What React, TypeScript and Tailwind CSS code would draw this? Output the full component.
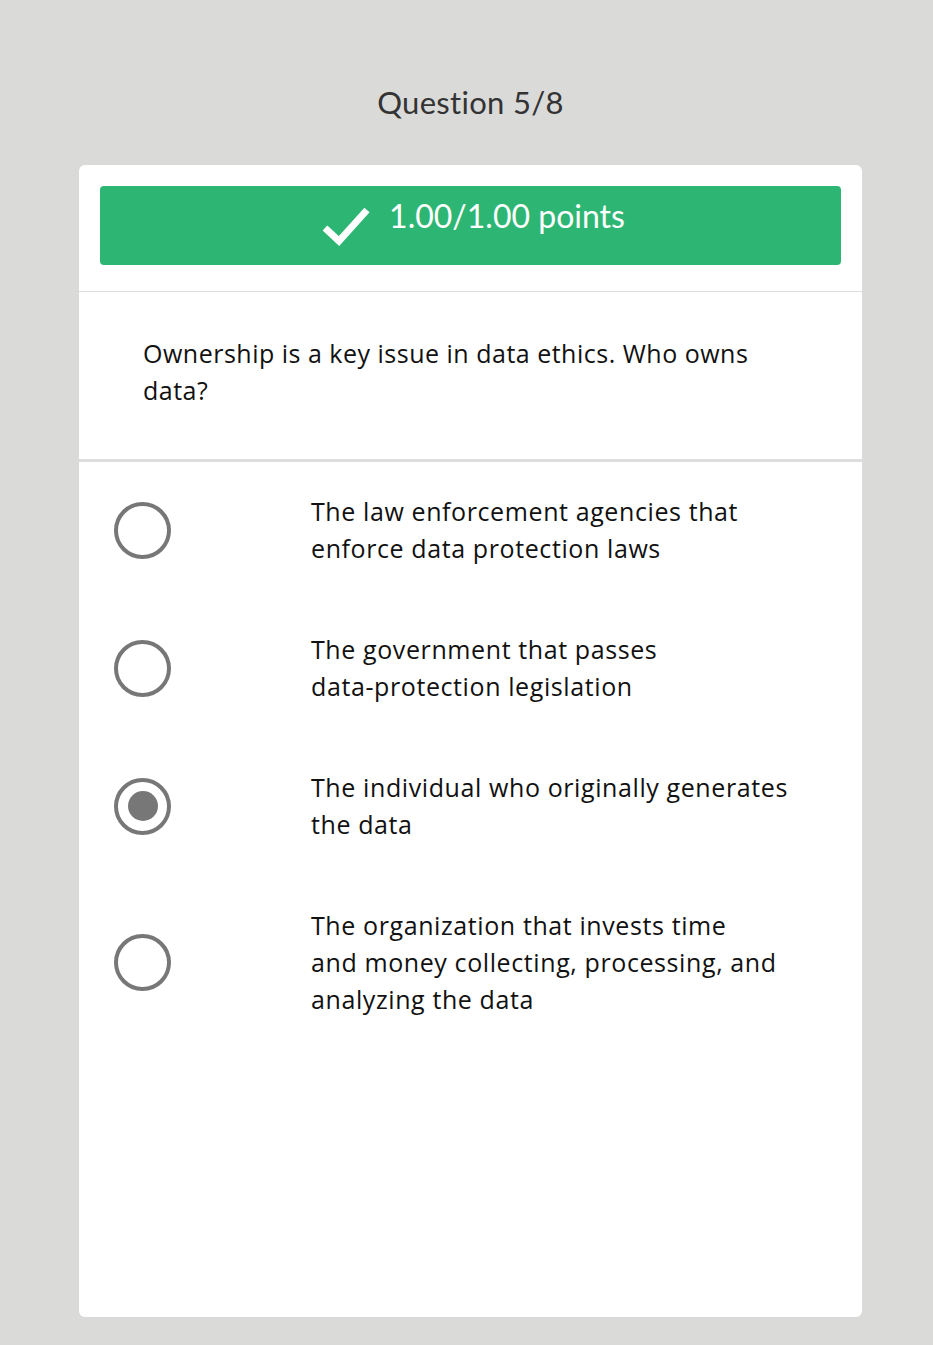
import React from 'react';

const options: string[][] = [
  ['The law enforcement agencies that', 'enforce data protection laws'],
  ['The government that passes', 'data-protection legislation'],
  ['The individual who originally generates', 'the data'],
  ['The organization that invests time', 'and money collecting, processing, and', 'analyzing the data'],
];

const Radio: React.FC<{ checked: boolean }> = ({ checked }) => (
  <div className="w-[57px] h-[57px] rounded-full border-[4px] border-[#777777] flex items-center justify-center shrink-0">
    {checked && <div className="w-[30px] h-[30px] rounded-full bg-[#777777]" />}
  </div>
);

const App: React.FC = () => {
  return (
    <div className="min-h-[1345px] bg-[#dadad9] pt-[83px] pb-7 font-['Open_Sans',sans-serif]">
      <div className="ml-[79px] w-[783px]">
        <h1 className="text-center text-[31px] leading-[38px] text-[#333333] font-['Lato',sans-serif] tracking-[0.3px]">
          Question 5/8
        </h1>

        <div className="mt-[44px] h-[1152px] bg-white rounded-[6px] flex flex-col">
          <div className="p-[21px] pb-[26px]">
            <div className="h-[79px] bg-[#2db673] rounded-[4px] flex items-start justify-center pt-[12px] pl-[5px] gap-[18px] text-white">
              <svg width="50" height="40" viewBox="0 0 50 40" className="mt-[8px]">
                <path d="M4 22 L18 35 L46 4" fill="none" stroke="white" strokeWidth="7" />
              </svg>
              <span className="text-[32px] leading-[36px] font-['Lato',sans-serif]">1.00/1.00 points</span>
            </div>
          </div>

          <div className="border-t border-[#dddddd] px-[64px] pt-[43px] pb-[50px] text-[25px] leading-[37px] tracking-[0.5px] text-[#111111]">
            <p>Ownership is a key issue in data ethics. Who owns</p>
            <p>data?</p>
          </div>

          <div className="border-t-[3px] border-[#dddddd] px-[35px] pt-[31px] flex flex-col gap-[64px]">
            {options.map((ls, i) => (
              <div key={i} className="flex items-center">
                <Radio checked={i === 2} />
                <div className="ml-[140px] text-[25px] leading-[37px] tracking-[0.6px] text-[#111111]">
                  {ls.map((l, j) => (
                    <p key={j}>{l}</p>
                  ))}
                </div>
              </div>
            ))}
          </div>
        </div>
      </div>
    </div>
  );
};

export default App;
